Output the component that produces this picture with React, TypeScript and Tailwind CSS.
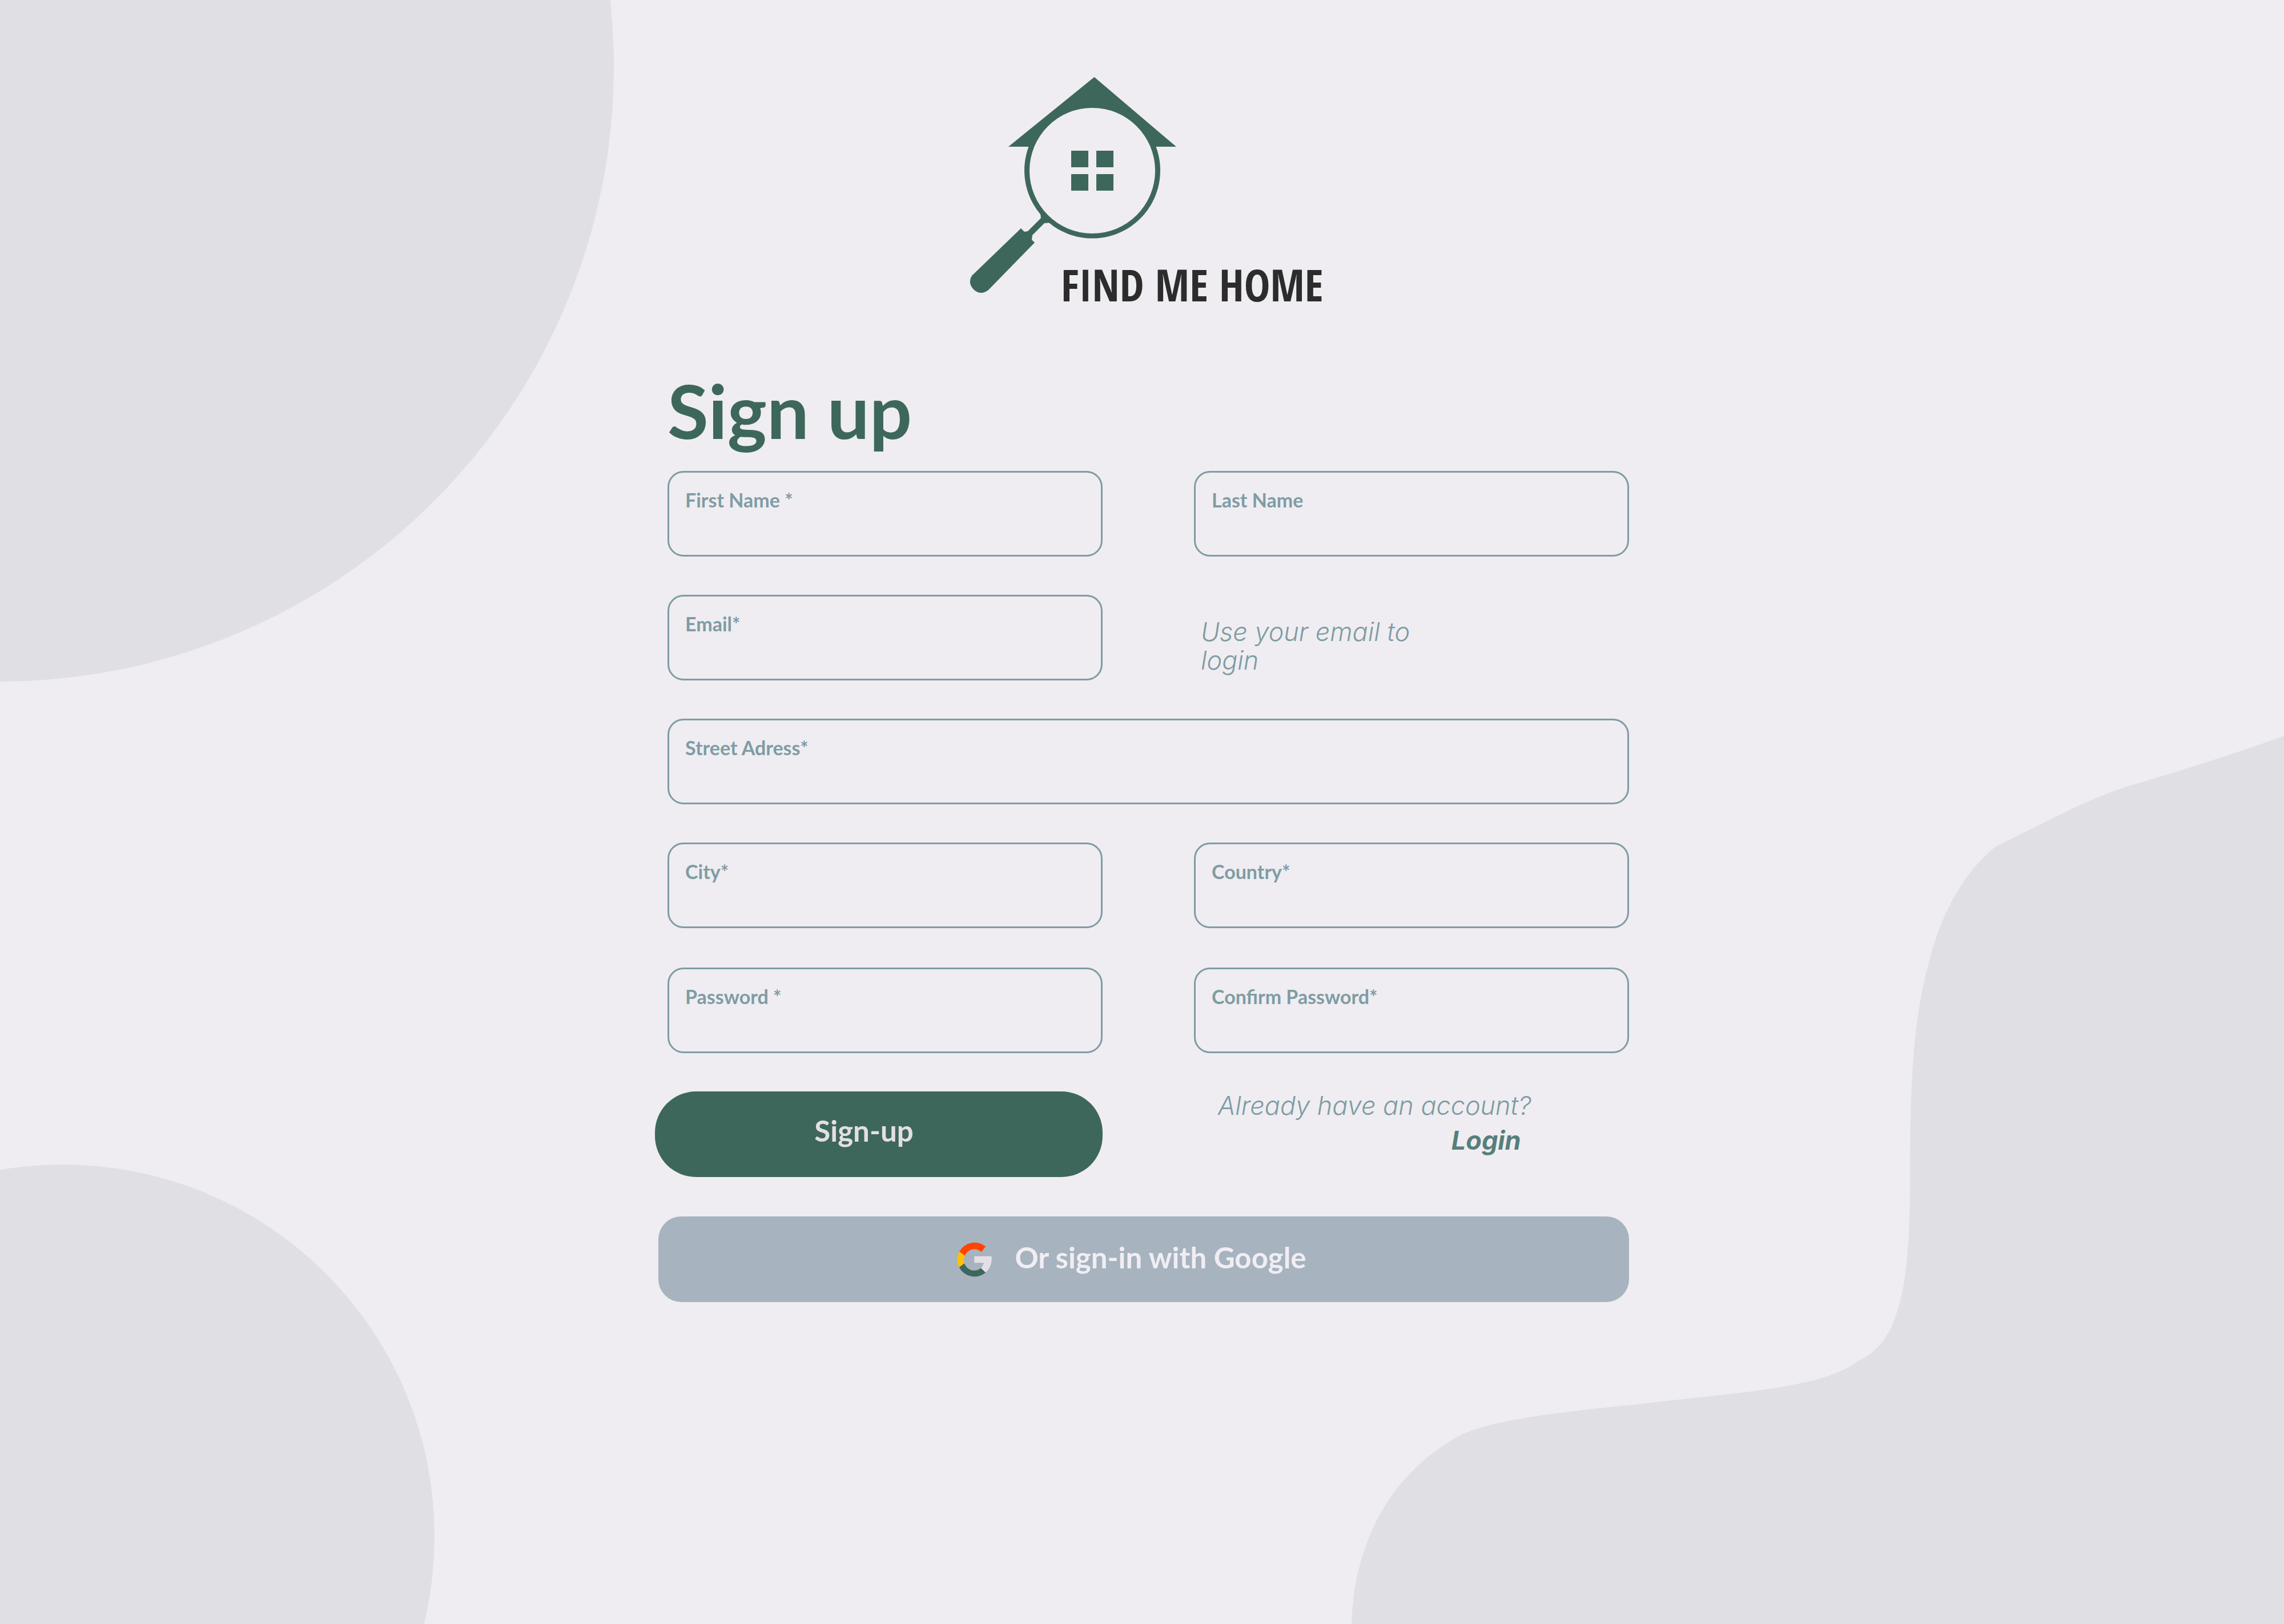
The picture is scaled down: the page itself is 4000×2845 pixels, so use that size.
import type { ReactNode } from "react";

function Backdrop() {
  return (
    <svg
      className="absolute inset-0 h-full w-full"
      viewBox="0 0 4000 2845"
      preserveAspectRatio="none"
      fill="#e0dfe4"
      aria-hidden="true"
    >
      <circle cx="-2" cy="117" r="1077" />
      <circle cx="110" cy="2691" r="651" />
      <path d="M4000 1289C3915 1320 3830 1347 3745 1372C3680 1391 3634 1414 3580 1441L3495 1483C3437 1530 3397 1605 3376 1694C3347 1800 3346 1930 3345 2045C3346 2230 3334 2350 3254 2384C3196 2432 3030 2441 2894 2457C2780 2470 2640 2480 2564 2511C2430 2580 2371 2710 2367 2845H4000Z" />
    </svg>
  );
}

function Logo() {
  return (
    <svg
      className="h-[402px] w-[616px] overflow-visible"
      viewBox="1699 135 616 402"
      role="img"
      aria-label="Find me home"
    >
      <g fill="#3e675b">
        <path
          fillRule="evenodd"
          d="M1916.5 135L2060 257H2024.5A119 119 0 1 1 1801.5 257H1766ZM1913 189A110 110 0 1 0 1913 409A110 110 0 1 0 1913 189Z"
        />
        <path d="M1876 264h30v29h-30zM1920 264h30v29h-30zM1876 305h30v29h-30zM1920 305h30v29h-30z" />
        <path d="M1822 374L1840 390L1829 391L1808 412L1807 420L1812 425L1731 508Q1718 518 1706 508Q1694 496 1702 483L1788 400L1794 406L1800 405L1823 382Z" />
      </g>
      <text
        x="1858"
        y="528"
        fill="#2c2c2c"
        className="font-['Open_Sans_Condensed','Roboto_Condensed',sans-serif] text-[77px] font-bold"
      >
        FIND ME HOME
      </text>
    </svg>
  );
}

function GoogleIcon() {
  return (
    <svg className="size-[61px] shrink-0" viewBox="0 0 61 61" aria-hidden="true">
      <path fill="#ff4500" d="M4 16.7A30.5 30.5 0 0 1 50.3 7.8L42.7 17.2A18 18 0 0 0 13.7 23.7Z" />
      <path fill="#ffc107" d="M4 16.7A30.5 30.5 0 0 0 3.8 44.3L13 37.3A18.2 18.2 0 0 1 13.7 23.7Z" />
      <path fill="#3e675b" d="M3.8 44.3A30.5 30.5 0 0 0 50.3 53.3L42 45.6A18.2 18.2 0 0 1 13 37.3Z" />
      <path fill="#e2e0e6" d="M30.3 24.7H60.5Q62.5 42 50.3 53.3L42 45.6Q45.6 42 47 36.3H30.3Z" />
    </svg>
  );
}

type FieldProps = { id: string; label: string; type?: string; wide?: boolean };

function Field({ id, label, type = "text", wide = false }: FieldProps) {
  return (
    <div
      className={`flex h-[150px] flex-col rounded-[28px] border-3 border-[#7f9ca3] px-[28px] pt-[28px] ${
        wide ? "col-span-2" : ""
      }`}
    >
      <label htmlFor={id} className="text-[34px] leading-[40px] font-bold text-[#7f9ca3]">
        {label}
      </label>
      <input
        id={id}
        name={id}
        type={type}
        className="min-h-0 w-full flex-1 bg-transparent text-[34px] text-[#3e675b] outline-none"
      />
    </div>
  );
}

function Rows({ children }: { children: ReactNode }) {
  return <div className="grid grid-cols-2 gap-x-[160px] gap-y-[67px] pl-[22px]">{children}</div>;
}

export default function App() {
  return (
    <div className="relative min-h-screen overflow-hidden bg-[#efedf2] font-['Lato',sans-serif]">
      <Backdrop />
      <main className="relative mx-auto max-w-[1706px] pt-[135px] pb-20">
        <div className="flex justify-center pl-[14px]">
          <Logo />
        </div>
        <h1 className="mt-[107px] mb-[31px] pl-[22px] text-[131px] leading-[150px] font-bold text-[#3e675b]">
          Sign up
        </h1>
        <form className="flex flex-col gap-[69px]" onSubmit={(e) => e.preventDefault()}>
          <Rows>
            <Field id="first-name" label="First Name *" />
            <Field id="last-name" label="Last Name" />
            <Field id="email" label="Email*" type="email" />
            <p className="max-w-[420px] pt-[40px] pl-[12px] font-['Inter',sans-serif] text-[45px] leading-[50px] font-light text-[#7f9ca3] italic">
              Use your email to login
            </p>
            <Field id="street" label="Street Adress*" wide />
            <Field id="city" label="City*" />
            <Field id="country" label="Country*" />
          </Rows>
          <div className="flex flex-col gap-[67px]">
            <Rows>
              <Field id="password" label="Password *" type="password" />
              <Field id="confirm-password" label="Confirm Password*" type="password" />
            </Rows>
            <div className="grid grid-cols-[784fr_762fr] gap-x-[160px]">
              <button
                type="submit"
                className="h-[150px] rounded-[72px] bg-[#3e675b] pr-[52px] pb-[12px] text-[51px] font-bold text-[#e2dfe4]"
              >
                Sign-up
              </button>
              <div className="flex w-fit flex-col items-end gap-[11px] pl-[42px] font-['Inter',sans-serif] text-[45px] leading-[50px] italic">
                <p className="font-light text-[#7f9ca3]">Already have an account?</p>
                <a href="#login" className="pr-[18px] font-bold text-[#567f79]">
                  Login
                </a>
              </div>
            </div>
          </div>
          <div className="flex pl-[6px]">
            <button
              type="button"
              className="flex h-[150px] flex-1 items-center justify-center gap-[40px] rounded-[40px] bg-[#a7b3bf] pr-[42px] text-[51px] font-bold text-[#f0eef3]"
            >
              <GoogleIcon />
              <span className="pb-[6px]">Or sign-in with Google</span>
            </button>
          </div>
        </form>
      </main>
    </div>
  );
}
